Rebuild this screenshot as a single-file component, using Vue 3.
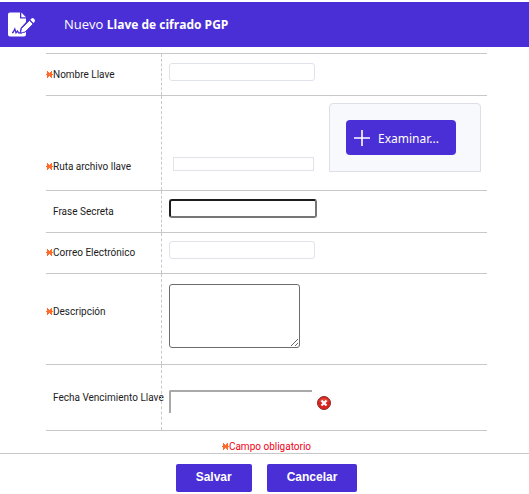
<script setup>
import { reactive } from 'vue'

const form = reactive({
  nombre: '',
  ruta: '',
  frase: '',
  correo: '',
  descripcion: '',
  vencimiento: ''
})
</script>

<template>
  <div class="page">
    <header class="bar">
      <svg class="logo" viewBox="0 0 28 26" aria-hidden="true">
        <path d="M2 0.500H12V6.500H18V10L12.500 16L11.500 21.500L17 20.500L18 19.500V22.500Q18 24.500 16 24.500H2Q0 24.500 0 22.500V2.500Q0 0.500 2 0.500Z" fill="#fff" />
        <path d="M13.300 0.500L18 5.300H13.300Z" fill="#fff" />
        <path d="M4 20.500H5L6.800 17L8 20.800L9.500 19L10.500 20.800H14" fill="none" stroke="#4b2fd6" stroke-width="1.300" />
        <path d="M12.500 21L13.500 16.500L21.500 8.500L25 12L17 20Z" fill="#fff" stroke="#4b2fd6" stroke-width="0.800" />
        <path d="M22.300 7.700L23.500 6.500Q24.800 5.500 26 6.700Q27.800 8.300 26.500 9.900L25.500 11Z" fill="#fff" />
      </svg>
      <h1>Nuevo <b>Llave de cifrado PGP</b></h1>
    </header>

    <form @submit.prevent>
      <div class="fields">
        <div class="row">
          <label for="nombre" class="required">Nombre Llave</label>
          <div class="cell"><input id="nombre" v-model="form.nombre" type="text" class="soft"></div>
        </div>
        <div class="row upload">
          <label for="ruta" class="required">Ruta archivo llave</label>
          <div class="cell">
            <input id="ruta" v-model="form.ruta" type="text" class="path">
            <div class="panel">
              <button type="button" class="browse">
                <svg viewBox="0 0 16 16" aria-hidden="true"><path d="M8 0V16M0 8H16" stroke="#fff" stroke-width="1.600" /></svg>
                <span>Examinar...</span>
              </button>
            </div>
          </div>
        </div>
        <div class="row">
          <label for="frase">Frase Secreta</label>
          <div class="cell"><input id="frase" v-model="form.frase" type="password" class="secret"></div>
        </div>
        <div class="row">
          <label for="correo" class="required">Correo Electrónico</label>
          <div class="cell"><input id="correo" v-model="form.correo" type="email" class="soft"></div>
        </div>
        <div class="row notes">
          <label for="descripcion" class="required">Descripción</label>
          <div class="cell"><textarea id="descripcion" v-model="form.descripcion"></textarea></div>
        </div>
        <div class="row expiry">
          <label for="vencimiento">Fecha Vencimiento Llave</label>
          <div class="cell">
            <input id="vencimiento" v-model="form.vencimiento" type="text" class="date">
            <button type="button" class="clear" aria-label="Borrar fecha" @click="form.vencimiento = ''">
              <svg viewBox="0 0 14 14" aria-hidden="true">
                <circle cx="7" cy="7" r="6.500" fill="#d9241f" stroke="#8f2a26" />
                <path d="M2 5.500A5.500 5.500 0 0 1 12 5.500Q7 8 2 5.500Z" fill="#e2473e" />
                <path d="M4.500 4.500L9.500 9.500M9.500 4.500L4.500 9.500" stroke="#fff" stroke-width="2.200" />
              </svg>
            </button>
          </div>
        </div>
      </div>

      <p class="legend required">Campo obligatorio</p>

      <footer class="actions">
        <button type="submit">Salvar</button>
        <button type="button" class="cancel">Cancelar</button>
      </footer>
    </form>
  </div>
</template>

<style>
body {
  margin: 0;
  background: #fff;
}
</style>

<style scoped>
.page {
  padding-top: 2px;
  font-family: Roboto, "Noto Sans", sans-serif;
  font-size: 10px;
  line-height: 14px;
  color: #1c1c1c;
}

.bar {
  display: flex;
  align-items: center;
  gap: 28px;
  box-sizing: border-box;
  height: 45px;
  padding: 0 8px;
  background: #4b2fd6;
  color: #fff;
}

.logo {
  width: 28px;
  height: 26px;
}

h1 {
  margin: 0;
  font-family: "Open Sans", "Noto Sans", sans-serif;
  font-size: 13px;
  font-weight: 400;
  line-height: 18px;
}

h1 b {
  font-size: 12px;
  font-weight: 700;
}

.fields {
  margin: 6px 42px 0 46px;
  border-top: 1px solid #c8c8c8;
}

.row {
  display: grid;
  grid-template-columns: 115px 1fr;
  border-bottom: 1px solid #c8c8c8;
}

.row label {
  align-self: center;
  padding-left: 7px;
  white-space: nowrap;
}

.required::before {
  content: "";
  display: inline-block;
  width: 7px;
  height: 7px;
  background:
    linear-gradient(#ff6a2f, #ff6a2f) center / 7px 1px no-repeat,
    linear-gradient(45deg, transparent 38%, #ff6a2f 38% 62%, transparent 62%) center / 5px 7px no-repeat,
    linear-gradient(135deg, transparent 38%, #ff6a2f 38% 62%, transparent 62%) center / 5px 7px no-repeat;
}

.row label.required {
  padding-left: 0;
}

.cell {
  display: flex;
  align-items: flex-start;
  padding: 9px 6px 14px 7px;
  border-left: 1px dashed #c8c8c8;
}

input,
textarea {
  box-sizing: border-box;
  margin: 0;
  padding: 1px 4px;
  background: #fff;
  font: inherit;
  outline: 0;
}

.soft {
  width: 146px;
  height: 18px;
  border: 1px solid #e0e2ec;
  border-radius: 3px;
}

.upload label {
  align-self: end;
  padding-bottom: 16px;
}

.upload .cell {
  align-items: flex-end;
  justify-content: space-between;
  padding: 7px 6px 18px 11px;
}

.path {
  width: 141px;
  height: 14px;
  margin-bottom: 1px;
  border: 1px solid #e0e2ec;
}

.panel {
  box-sizing: border-box;
  width: 152px;
  padding: 16px;
  border: 1px solid #dcdfe6;
  border-radius: 4px 4px 0 0;
  background: #f8f9fc;
}

button {
  border: 0;
  background: #4b2fd6;
  color: #fff;
}

.browse {
  display: flex;
  align-items: center;
  gap: 8px;
  width: 110px;
  height: 35px;
  padding: 0 8px;
  border-radius: 4px;
  font: 12px/18px "Noto Sans", "Open Sans", sans-serif;
}

.browse span {
  padding-top: 2px;
}

.browse svg {
  width: 16px;
  height: 16px;
}

.secret {
  width: 148px;
  height: 19px;
  border: 2px solid;
  border-color: #1c1c1c #767676 #767676 #1c1c1c;
  border-radius: 3px;
}

.row:nth-child(3) .cell {
  padding-top: 8px;
}

.row:nth-child(4) .cell {
  padding: 8px 6px 14px 7px;
}

.notes label {
  padding-bottom: 14px;
}

.notes .cell {
  padding: 10px 6px 16px 7px;
}

textarea {
  width: 131px;
  height: 64px;
  border: 1px solid #6c6c6c;
  border-radius: 3px;
}

.expiry .cell {
  align-items: flex-end;
  gap: 5px;
  padding: 25px 6px 17px 7px;
}

.date {
  width: 143px;
  height: 23px;
  border: solid #a9a9a9;
  border-width: 2px 0 0 2px;
  border-radius: 2px 0 0 0;
}

.clear {
  display: flex;
  width: 14px;
  height: 14px;
  margin-bottom: 3px;
  padding: 0;
  background: none;
}

.legend {
  margin: 0;
  padding: 9px 0 0 4px;
  text-align: center;
  color: #f00018;
}

.actions {
  display: flex;
  justify-content: center;
  gap: 15px;
  margin-top: -1px;
  padding: 10px 0 2px 4px;
  border-top: 1px solid #c8c8c8;
}

.actions button {
  height: 28px;
  padding: 0 20px 2px;
  border-radius: 2px;
  font: bold 12px/16px "Liberation Sans", Arial, sans-serif;
}
</style>
